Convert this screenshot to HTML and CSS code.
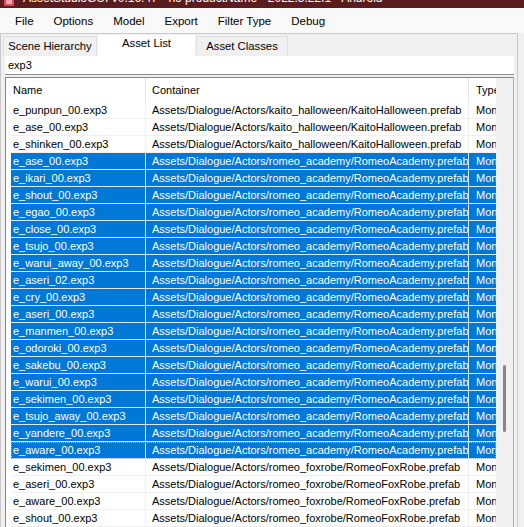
FILE: index.html
```html
<!DOCTYPE html>
<html lang="en">
<head>
  <meta charset="UTF-8">
  <title>AssetStudioGUI</title>
  <link rel="stylesheet" href="styles.css">
</head>
<body>

  <div class="titlebar">
    <svg class="app-icon" width="12" height="12" viewBox="0 0 12 12"><rect x="1" y="1" width="10" height="10" rx="1" fill="#e2465a"/><rect x="3" y="3" width="6" height="6" fill="#f7a3ad"/></svg>
    <span class="title-text">AssetStudioGUI v0.16.47 - no productName - 2022.3.22f1 - Android</span>
  </div>

  <div class="menubar">
    <span class="menu-item">File</span>
    <span class="menu-item">Options</span>
    <span class="menu-item">Model</span>
    <span class="menu-item">Export</span>
    <span class="menu-item">Filter Type</span>
    <span class="menu-item">Debug</span>
  </div>

  <div class="panel">
    <div class="tabs">
      <div class="tab tab-scene">Scene Hierarchy</div>
      <div class="tab tab-assets active">Asset List</div>
      <div class="tab tab-classes">Asset Classes</div>
    </div>

    <div class="tab-page">
      <div class="filter">exp3</div>

      <div class="listview">
        <div class="list-body">
          <div class="list-header">
            <div class="hcell col-name">Name</div>
            <div class="hcell col-container">Container</div>
            <div class="hcell col-type">Type</div>
          </div>

          <div class="row"><div class="cell col-name">e_punpun_00.exp3</div><div class="cell col-container">Assets/Dialogue/Actors/kaito_halloween/KaitoHalloween.prefab</div><div class="cell col-type">MonoBehaviour</div></div>
          <div class="row"><div class="cell col-name">e_ase_00.exp3</div><div class="cell col-container">Assets/Dialogue/Actors/kaito_halloween/KaitoHalloween.prefab</div><div class="cell col-type">MonoBehaviour</div></div>
          <div class="row"><div class="cell col-name">e_shinken_00.exp3</div><div class="cell col-container">Assets/Dialogue/Actors/kaito_halloween/KaitoHalloween.prefab</div><div class="cell col-type">MonoBehaviour</div></div>

          <div class="row selected"><div class="cell col-name">e_ase_00.exp3</div><div class="cell col-container">Assets/Dialogue/Actors/romeo_academy/RomeoAcademy.prefab</div><div class="cell col-type">MonoBehaviour</div></div>
          <div class="row selected"><div class="cell col-name">e_ikari_00.exp3</div><div class="cell col-container">Assets/Dialogue/Actors/romeo_academy/RomeoAcademy.prefab</div><div class="cell col-type">MonoBehaviour</div></div>
          <div class="row selected"><div class="cell col-name">e_shout_00.exp3</div><div class="cell col-container">Assets/Dialogue/Actors/romeo_academy/RomeoAcademy.prefab</div><div class="cell col-type">MonoBehaviour</div></div>
          <div class="row selected"><div class="cell col-name">e_egao_00.exp3</div><div class="cell col-container">Assets/Dialogue/Actors/romeo_academy/RomeoAcademy.prefab</div><div class="cell col-type">MonoBehaviour</div></div>
          <div class="row selected"><div class="cell col-name">e_close_00.exp3</div><div class="cell col-container">Assets/Dialogue/Actors/romeo_academy/RomeoAcademy.prefab</div><div class="cell col-type">MonoBehaviour</div></div>
          <div class="row selected"><div class="cell col-name">e_tsujo_00.exp3</div><div class="cell col-container">Assets/Dialogue/Actors/romeo_academy/RomeoAcademy.prefab</div><div class="cell col-type">MonoBehaviour</div></div>
          <div class="row selected"><div class="cell col-name">e_warui_away_00.exp3</div><div class="cell col-container">Assets/Dialogue/Actors/romeo_academy/RomeoAcademy.prefab</div><div class="cell col-type">MonoBehaviour</div></div>
          <div class="row selected"><div class="cell col-name">e_aseri_02.exp3</div><div class="cell col-container">Assets/Dialogue/Actors/romeo_academy/RomeoAcademy.prefab</div><div class="cell col-type">MonoBehaviour</div></div>
          <div class="row selected"><div class="cell col-name">e_cry_00.exp3</div><div class="cell col-container">Assets/Dialogue/Actors/romeo_academy/RomeoAcademy.prefab</div><div class="cell col-type">MonoBehaviour</div></div>
          <div class="row selected"><div class="cell col-name">e_aseri_00.exp3</div><div class="cell col-container">Assets/Dialogue/Actors/romeo_academy/RomeoAcademy.prefab</div><div class="cell col-type">MonoBehaviour</div></div>
          <div class="row selected"><div class="cell col-name">e_manmen_00.exp3</div><div class="cell col-container">Assets/Dialogue/Actors/romeo_academy/RomeoAcademy.prefab</div><div class="cell col-type">MonoBehaviour</div></div>
          <div class="row selected"><div class="cell col-name">e_odoroki_00.exp3</div><div class="cell col-container">Assets/Dialogue/Actors/romeo_academy/RomeoAcademy.prefab</div><div class="cell col-type">MonoBehaviour</div></div>
          <div class="row selected"><div class="cell col-name">e_sakebu_00.exp3</div><div class="cell col-container">Assets/Dialogue/Actors/romeo_academy/RomeoAcademy.prefab</div><div class="cell col-type">MonoBehaviour</div></div>
          <div class="row selected"><div class="cell col-name">e_warui_00.exp3</div><div class="cell col-container">Assets/Dialogue/Actors/romeo_academy/RomeoAcademy.prefab</div><div class="cell col-type">MonoBehaviour</div></div>
          <div class="row selected"><div class="cell col-name">e_sekimen_00.exp3</div><div class="cell col-container">Assets/Dialogue/Actors/romeo_academy/RomeoAcademy.prefab</div><div class="cell col-type">MonoBehaviour</div></div>
          <div class="row selected"><div class="cell col-name">e_tsujo_away_00.exp3</div><div class="cell col-container">Assets/Dialogue/Actors/romeo_academy/RomeoAcademy.prefab</div><div class="cell col-type">MonoBehaviour</div></div>
          <div class="row selected"><div class="cell col-name">e_yandere_00.exp3</div><div class="cell col-container">Assets/Dialogue/Actors/romeo_academy/RomeoAcademy.prefab</div><div class="cell col-type">MonoBehaviour</div></div>
          <div class="row selected focused"><div class="cell col-name">e_aware_00.exp3</div><div class="cell col-container">Assets/Dialogue/Actors/romeo_academy/RomeoAcademy.prefab</div><div class="cell col-type">MonoBehaviour</div></div>

          <div class="row"><div class="cell col-name">e_sekimen_00.exp3</div><div class="cell col-container">Assets/Dialogue/Actors/romeo_foxrobe/RomeoFoxRobe.prefab</div><div class="cell col-type">MonoBehaviour</div></div>
          <div class="row"><div class="cell col-name">e_aseri_00.exp3</div><div class="cell col-container">Assets/Dialogue/Actors/romeo_foxrobe/RomeoFoxRobe.prefab</div><div class="cell col-type">MonoBehaviour</div></div>
          <div class="row"><div class="cell col-name">e_aware_00.exp3</div><div class="cell col-container">Assets/Dialogue/Actors/romeo_foxrobe/RomeoFoxRobe.prefab</div><div class="cell col-type">MonoBehaviour</div></div>
          <div class="row"><div class="cell col-name">e_shout_00.exp3</div><div class="cell col-container">Assets/Dialogue/Actors/romeo_foxrobe/RomeoFoxRobe.prefab</div><div class="cell col-type">MonoBehaviour</div></div>
        </div>

        <div class="scrollbar">
          <div class="thumb"></div>
        </div>
      </div>
    </div>
  </div>

</body>
</html>
```

FILE: styles.css
```css
body {
  margin: 0;
  height: 527px;
  overflow: hidden;
  background: #f0f0f0;
  font-family: 'Liberation Sans', Arial, sans-serif;
  font-size: 11px;
  color: #000;
}

.titlebar {
  height: 8px;
  overflow: hidden;
  background: #5a1c1c;
  color: #fff;
  display: flex;
  align-items: flex-start;
}

.app-icon {
  flex: none;
  margin: -5px 0 0 3px;
}

.title-text {
  margin: -8px 0 0 8px;
  line-height: 12px;
  font-size: 12px;
  white-space: nowrap;
}

.menubar {
  height: 25px;
  background: #f9f9f9;
  display: flex;
  align-items: center;
  padding-left: 5px;
  font-size: 11.5px;
}

.menu-item {
  padding: 0 10px;
}

.panel {
  width: 516px;
  border: 1px solid #c9c9c9;
  border-bottom: none;
  background: #f0f0f0;
  height: 494px;
}

.tabs {
  display: flex;
  align-items: flex-end;
  height: 22px;
  padding-left: 2px;
  font-size: 11.3px;
}

.tab {
  height: 20px;
  box-sizing: border-box;
  border: 1px solid #e0e0e0;
  border-bottom: none;
  text-align: center;
  line-height: 19px;
  background: #f0f0f0;
}

.tab-scene {
  width: 94px;
}

.tab-assets {
  width: 99px;
}

.tab-classes {
  width: 92px;
}

.tab.active {
  height: 22px;
  background: #fff;
  line-height: 17px;
  border-color: #f3f3f3;
}

.tab-page {
  padding: 0 3px 0 4px;
  height: 472px;
  overflow: hidden;
}

.filter {
  height: 19px;
  box-sizing: border-box;
  background: #fff;
  border-bottom: 1px solid #8e8e8e;
  padding-left: 3px;
  line-height: 19px;
  margin-bottom: 2px;
}

.listview {
  display: flex;
  border: 1px solid #828790;
  border-right-color: #b0b0b0;
  background: #fff;
  height: 460px;
  overflow: hidden;
}

.list-body {
  flex: 1;
  overflow: hidden;
}

.list-header {
  display: flex;
  height: 24px;
}

.hcell {
  box-sizing: border-box;
  border-right: 1px solid #e5e5e5;
  line-height: 25px;
  white-space: nowrap;
  overflow: hidden;
}

.hcell.col-name {
  width: 140px;
  padding-left: 7px;
}

.hcell.col-container {
  width: 323px;
  padding-left: 6px;
}

.col-type {
  flex: 1;
  padding-left: 7px;
  border-right: none;
}

.row {
  display: flex;
  height: 17px;
  box-sizing: border-box;
  margin-left: 5px;
  border-bottom: 1px solid #f0f0f0;
}

.cell {
  box-sizing: border-box;
  white-space: nowrap;
  overflow: hidden;
  line-height: 17px;
  border-right: 1px solid #f0f0f0;
}

.cell.col-name {
  width: 135px;
  padding-left: 2px;
}

.cell.col-container {
  width: 323px;
  padding-left: 6px;
}

.cell.col-type {
  border-right: none;
}

.row.selected {
  background: #0078d7;
  color: #fff;
  border-bottom-color: #d9e9f7;
}

.row.selected .cell {
  border-right-color: #d9e9f7;
}

.row.focused {
  outline: 1px dotted #f0a85a;
  outline-offset: -1px;
}

.scrollbar {
  width: 17px;
  flex: none;
  background: #f0f0f0;
  display: flex;
  justify-content: center;
}

.thumb {
  width: 3px;
  height: 67px;
  margin-top: 287px;
  border-radius: 2px;
  background: #868686;
}
```
